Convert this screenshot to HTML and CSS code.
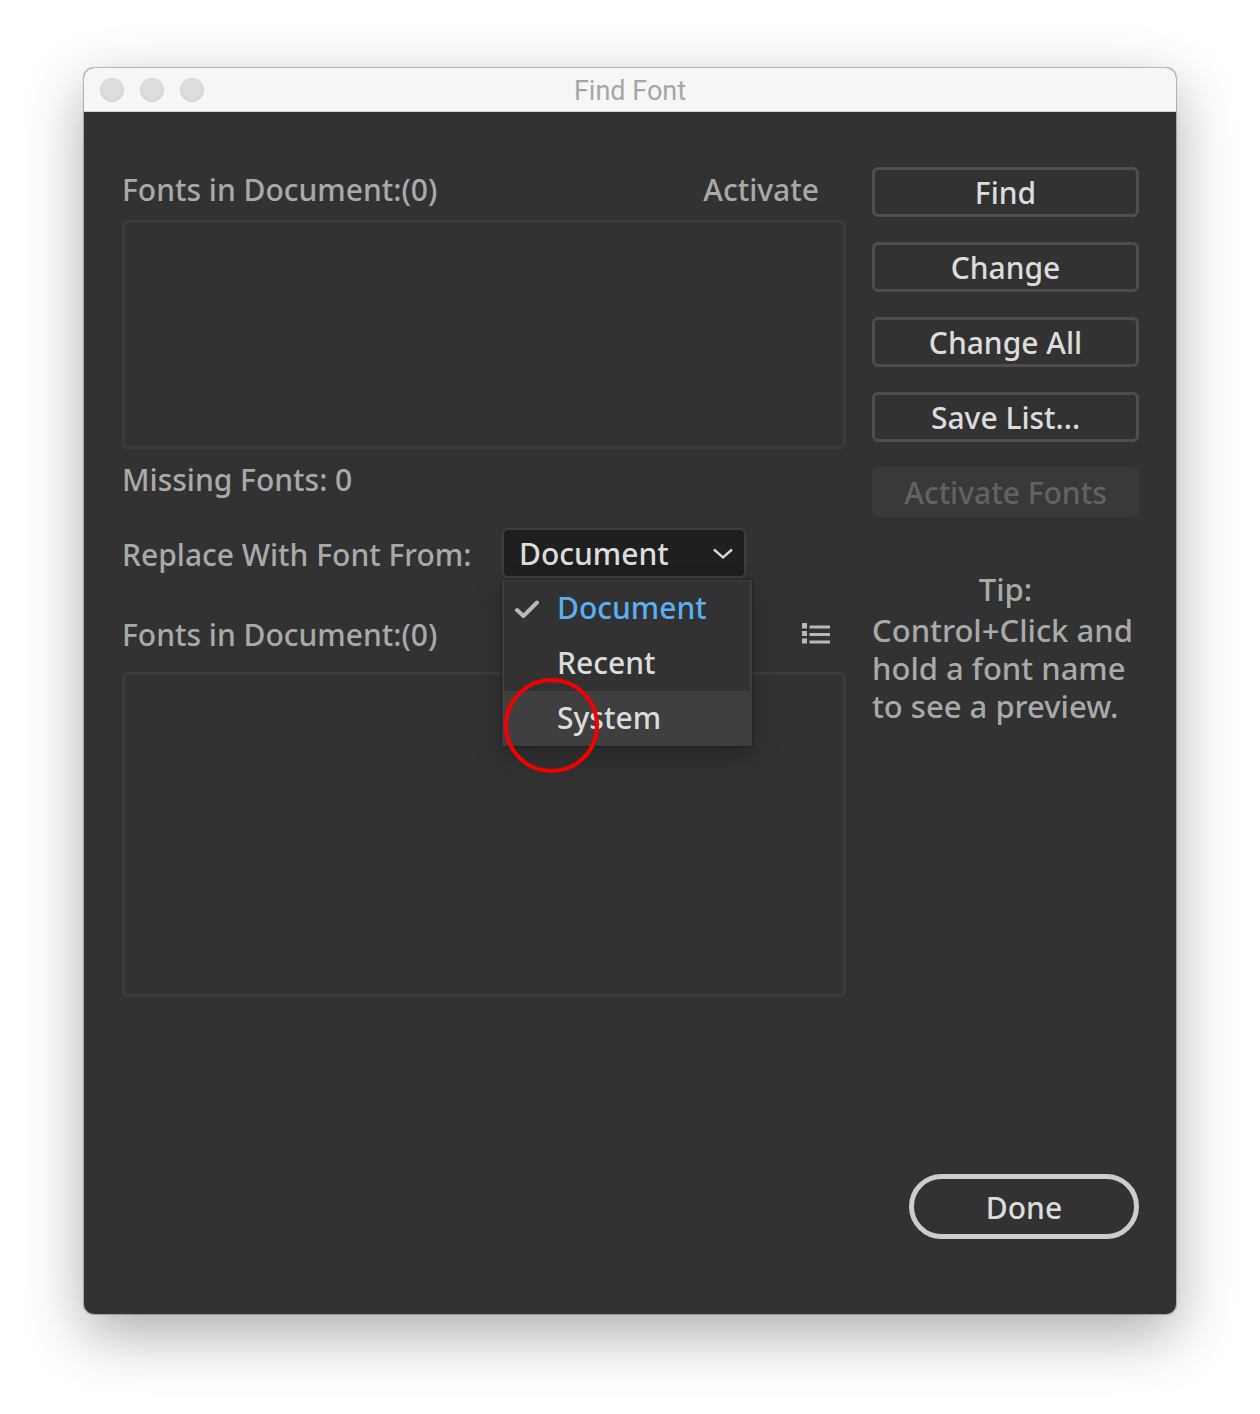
FILE: index.html
```html
<!DOCTYPE html>
<html lang="en">
<head>
<meta charset="utf-8">
<meta name="viewport" content="width=device-width, initial-scale=1">
<title>Find Font</title>
<link rel="stylesheet" href="styles.css">
</head>
<body>
<section class="window" role="dialog" aria-labelledby="dialog-title">
  <header class="titlebar">
    <div class="lights"><span class="light"></span><span class="light"></span><span class="light"></span></div>
    <h1 class="title" id="dialog-title">Find Font</h1>
  </header>
  <div class="panel">
    <div class="columns">
      <main class="fonts">
        <div class="row">
          <span>Fonts in Document:(0)</span>
          <span class="activate">Activate</span>
        </div>
        <div class="list list-found"></div>
        <p class="missing">Missing Fonts: 0</p>
        <div class="replace">
          <label class="label" for="source">Replace With Font From:</label>
          <div class="picker">
            <select class="select" id="source">
              <option selected>Document</option>
              <option>Recent</option>
              <option>System</option>
            </select>
            <svg class="chevron" width="20" height="12" viewBox="0 0 20 12" aria-hidden="true"><path d="M1 1.5 10 9.5 19 1.5" fill="none" stroke="#d6d6d6" stroke-width="2.4"/></svg>
            <ul class="menu" role="listbox" aria-label="Font source">
              <li class="item item-checked" role="option" aria-selected="true">
                <svg class="check" width="26" height="20" viewBox="0 0 26 20" aria-hidden="true"><path d="M3 12 9.500 18 23 4.500" fill="none" stroke="#b8b8b8" stroke-width="4" stroke-linecap="round"/></svg>
                Document
              </li>
              <li class="item" role="option" aria-selected="false">Recent</li>
              <li class="item item-hover" role="option" aria-selected="false">System</li>
            </ul>
            <span class="marker"></span>
          </div>
        </div>
        <div class="row">
          <span>Fonts in Document:(0)</span>
          <button class="view" type="button" aria-label="List view">
            <svg width="28" height="24" viewBox="0 0 28 24" aria-hidden="true"><path fill="#b8b8b8" d="M0 0h5v5.500H0zM0 8h5v5H0zM0 15.500h5v5H0zM7.500 2.500h20.500v3H7.500zM7.500 10h20.500v3H7.500zM7.500 17.500h20.500v3H7.500z"/></svg>
          </button>
        </div>
        <div class="list list-replace"></div>
      </main>
      <aside class="actions">
        <button class="button" type="button">Find</button>
        <button class="button" type="button">Change</button>
        <button class="button" type="button">Change All</button>
        <button class="button" type="button">Save List...</button>
        <button class="button" type="button" disabled>Activate Fonts</button>
        <div class="tip">
          <p class="tip-title">Tip:</p>
          <p>Control+Click and<br>hold a font name<br>to see a preview.</p>
        </div>
      </aside>
    </div>
    <footer class="footer"><button class="done" type="button">Done</button></footer>
  </div>
</section>
</body>
</html>
```
FILE: styles.css
```css
* {
  box-sizing: border-box;
}

body {
  margin: 0;
  padding: 68px 84px 100px;
  background: #fff;
  color: #a9a9a9;
  font: 500 30px/38px "Noto Sans", sans-serif;
}

p,
ul {
  margin: 0;
  padding: 0;
}

button,
select {
  font: inherit;
}

.window {
  display: flex;
  flex-direction: column;
  min-height: calc(100vh - 168px);
  border-radius: 10px;
  background: #323232;
  box-shadow: 0 0 1px 1px rgba(0, 0, 0, 0.25), 0 20px 60px rgba(0, 0, 0, 0.33);
}

.titlebar {
  display: grid;
  grid-template-columns: 1fr auto 1fr;
  align-items: center;
  height: 44px;
  padding: 0 16px;
  border-bottom: 1px solid #d0d2d0;
  border-radius: 10px 10px 0 0;
  background: #f6f6f6;
}

.lights {
  display: flex;
  gap: 16px;
}

.light {
  width: 24px;
  height: 24px;
  border: 1px solid #d0d0d0;
  border-radius: 50%;
  background: #ddd;
}

.title {
  margin: 0;
  padding-top: 2px;
  color: #a6a6a6;
  font: 400 27px/32px Roboto, sans-serif;
}

.panel {
  display: flex;
  flex: 1;
  flex-direction: column;
  padding: 55px 37px 75px 38px;
}

.columns {
  display: flex;
  gap: 26px;
}

.fonts {
  flex: 1;
  min-width: 0;
}

.row {
  display: flex;
  align-items: center;
  justify-content: space-between;
  height: 46px;
}

.activate {
  margin-right: 27px;
}

.view {
  display: flex;
  margin-right: 16px;
  padding: 0;
  border: 0;
  background: none;
}

.list {
  border: 3px solid #3b3b3b;
  border-radius: 6px;
}

.list-found {
  height: 229px;
  margin-top: 7px;
}

.list-replace {
  height: 325px;
  margin-top: 14px;
}

.missing {
  margin-top: 12px;
}

.replace {
  display: flex;
  align-items: center;
  justify-content: space-between;
  margin: 29px 100px 34px 0;
}

.label {
  padding-top: 3px;
}

.picker {
  position: relative;
  width: 244px;
}

.select {
  display: block;
  width: 100%;
  height: 50px;
  padding: 2px 15px 0;
  border: 2px solid #3d3d3d;
  border-radius: 6px;
  background: #1f1f1f;
  color: #dcdcdc;
  appearance: none;
}

.chevron {
  position: absolute;
  top: 20px;
  right: 13px;
}

.menu {
  position: absolute;
  z-index: 1;
  top: 52px;
  left: 0;
  width: 250px;
  border: 2px solid #3d3d3d;
  border-top-width: 1px;
  border-bottom: 0;
  background: #323232;
  box-shadow: 0 0 2px rgba(0, 0, 0, 0.6), 0 10px 24px rgba(0, 0, 0, 0.25);
  color: #dcdcdc;
  list-style: none;
}

.item {
  display: flex;
  align-items: center;
  height: 55px;
  padding: 0 0 2px 53px;
}

.item-checked {
  gap: 17px;
  padding-left: 10px;
  color: #5aaef2;
}

.item-hover {
  background: #3f3f3f;
}

.marker {
  position: absolute;
  z-index: 2;
  top: 150px;
  left: 2px;
  width: 95px;
  height: 95px;
  border: 4px solid #f40000;
  border-radius: 50%;
}

.actions {
  display: flex;
  flex: 0 0 267px;
  flex-direction: column;
  gap: 25px;
}

.button {
  height: 50px;
  padding: 2px 0 0;
  border: 3px solid #4e4e4e;
  border-radius: 6px;
  background: none;
  color: #dcdcdc;
}

.button:disabled {
  border-color: #393939;
  background: #393939;
  color: #626262;
}

.tip {
  margin-top: 28px;
  font-size: 31px;
  white-space: nowrap;
}

.tip-title {
  margin-bottom: 3px;
  text-align: center;
}

.footer {
  display: flex;
  justify-content: flex-end;
  margin-top: auto;
}

.done {
  width: 230px;
  height: 65px;
  padding: 2px 0 0;
  border: 5px solid #cdcdcd;
  border-radius: 33px;
  background: none;
  color: #dcdcdc;
}
```
